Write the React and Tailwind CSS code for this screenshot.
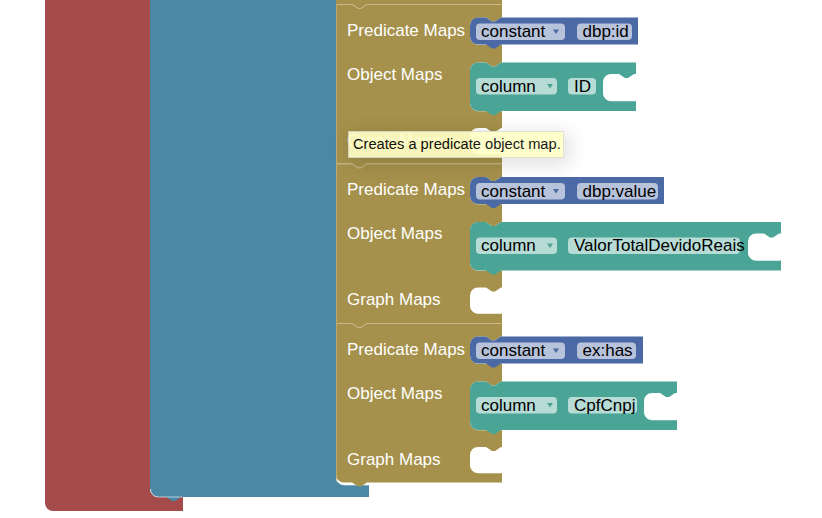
import React from 'react';

const FONT = '"Liberation Sans", Arial, sans-serif';

const RED = '#a54b4b';
const BLUE = '#4b88a5';
const OLIVE = '#a5914b';
const OLIVE_LIGHT = '#c6b886';
const CONST_BLUE = '#4b69a5';
const TEAL = '#4ba596';

// stacked "predicate object map" blocks inside the blue statement input
const stacks = [
    {
        T: 4,
        pred: { value: 'dbp:id', fieldEnd: 632, right: 638 },
        obj: { value: 'ID', fieldEnd: 596, mouth: 603 },
    },
    {
        T: 163.5,
        pred: { value: 'dbp:value', fieldEnd: 658, right: 664 },
        obj: { value: 'ValorTotalDevidoReais', fieldEnd: 740, mouth: 748 },
    },
    {
        T: 323,
        pred: { value: 'ex:has', fieldEnd: 636, right: 643 },
        obj: { value: 'CpfCnpj', fieldEnd: 637, mouth: 644 },
        last: true,
    },
];

// statement mouth on the olive block (opens to the right)
const oliveMouth = (top, bottom) =>
    `V ${top} H 501 l -6,4 -3,0 -6,-4 H 478 a 8,8 0 0,0 -8,8 V ${bottom - 8} a 8,8 0 0,0 8,8 H 502`;

function olivePath(T, last) {
    const bottom = T + 159.5;
    const foot = last
        ? `H 367 l -6,4 -3,0 -6,-4 H 344 a 8,8 0 0,1 -8,-8 Z`
        : `H 367 l -6,4 -3,0 -6,-4 H 336 Z`;
    return [
        `M 336,${T} H 352 l 6,4 3,0 6,-4 H 502`,
        oliveMouth(T + 13.5, T + 40.5),
        oliveMouth(T + 58.5, T + 107),
        oliveMouth(T + 124, T + 150),
        `V ${bottom}`,
        foot,
    ].join(' ');
}

function Label({ x, y, children }) {
    return (
        <text x={x} y={y} fill="#fff" fontSize="17" fontFamily={FONT}>
            {children}
        </text>
    );
}

function Field({ x, y, w, h = 16.5, textX, textY, children }) {
    return (
        <g>
            <rect x={x} y={y} width={w} height={h} rx="4" ry="4" fill="#fff" fillOpacity="0.6" />
            <text x={textX} y={textY} fill="#000" fontSize="17" fontFamily={FONT}>
                {children}
            </text>
        </g>
    );
}

function Arrow({ x, y, color }) {
    return <polygon points={`${x},${y} ${x + 6},${y} ${x + 3},${y + 4.5}`} fill={color} />;
}

function ConstantBlock({ t, value, fieldEnd, right }) {
    const d = `M 470,${t + 8} a 8,8 0 0,1 8,-8 H 486 l 6,4 3,0 6,-4 H ${right} V ${t + 27} H 501 l -6,4 -3,0 -6,-4 H 478 a 8,8 0 0,1 -8,-8 Z`;
    return (
        <g>
            <path d={d} fill={CONST_BLUE} />
            <Field x={476} y={t + 6} w={89} textX={481} textY={t + 19.5}>
                constant
            </Field>
            <Arrow x={553} y={t + 12} color={CONST_BLUE} />
            <Field x={577} y={t + 6} w={fieldEnd - 577} textX={582.5} textY={t + 19.5}>
                {value}
            </Field>
        </g>
    );
}

function ColumnBlock({ t, value, fieldEnd, mouth }) {
    const right = mouth + 33;
    const d = [
        `M 470,${t + 8} a 8,8 0 0,1 8,-8 H 486 l 6,4 3,0 6,-4 H ${right}`,
        `V ${t + 11.5} H ${mouth + 31} l -6,4 -3,0 -6,-4 H ${mouth + 8} a 8,8 0 0,0 -8,8`,
        `V ${t + 30.5} a 8,8 0 0,0 8,8 H ${right}`,
        `V ${t + 48.5} H 501 l -6,4 -3,0 -6,-4 H 478 a 8,8 0 0,1 -8,-8 Z`,
    ].join(' ');
    return (
        <g>
            <path d={d} fill={TEAL} />
            <path
                d={`M ${mouth + 0.5},${t + 30.5} a 8,8 0 0,0 8,8 H ${right - 0.5}`}
                fill="none"
                stroke="#ffffff"
                strokeOpacity="0.45"
            />
            <Field x={476} y={t + 15.5} w={81} textX={481} textY={t + 29}>
                column
            </Field>
            <Arrow x={547} y={t + 21.5} color={TEAL} />
            <Field x={568} y={t + 15.5} w={fieldEnd - 568} textX={574} textY={t + 29}>
                {value}
            </Field>
        </g>
    );
}

function PredicateObjectMap({ T, pred, obj, last }) {
    const mouthBottoms = [T + 40.5, T + 107, T + 150];
    return (
        <g>
            <path d={olivePath(T, last)} fill={OLIVE} />
            {/* top highlight with notch */}
            <path
                d={`M 336.5,${T + 0.5} H 352 l 6,4 3,0 6,-4 H 501.5`}
                fill="none"
                stroke={OLIVE_LIGHT}
            />
            <path d={`M 336.5,${T + 1} V ${T + 159}`} fill="none" stroke={OLIVE_LIGHT} strokeOpacity="0.7" />
            {mouthBottoms.map((b) => (
                <path
                    key={b}
                    d={`M 470.5,${b - 8} a 8,8 0 0,0 8,8 H 501.5`}
                    fill="none"
                    stroke="#ffffff"
                    strokeOpacity="0.55"
                />
            ))}
            <Label x={347} y={T + 31.5}>Predicate Maps</Label>
            <Label x={347} y={T + 75.5}>Object Maps</Label>
            <Label x={347} y={T + 141.5}>Graph Maps</Label>
            <ConstantBlock t={T + 13.5} {...pred} />
            <ColumnBlock t={T + 58.5} {...obj} />
        </g>
    );
}

export default function App() {
    return (
        <div className="relative h-[518px] w-[822px] overflow-hidden bg-white">
            {/* block canvas */}
            <svg className="absolute inset-0" width="822" height="518" viewBox="0 0 822 518">
                <path
                    d="M 45,-20 H 150 V 489 a 8,8 0 0,0 8,8 H 183 V 511 H 53 a 8,8 0 0,1 -8,-8 Z"
                    fill={RED}
                />
                <path
                    d="M 150,-20 H 336 V 477 a 8,8 0 0,0 8,8 H 369 V 497 H 181 l -6,4 -3,0 -6,-4 H 158 a 8,8 0 0,1 -8,-8 Z"
                    fill={BLUE}
                />
                <path d="M 150.5,489 a 8,8 0 0,0 8,8 H 182.5" fill="none" stroke="#ffffff" strokeOpacity="0.6" />
                <path d="M 336.5,477 a 8,8 0 0,0 8,8 H 368.5" fill="none" stroke="#ffffff" strokeOpacity="0.6" />
                {/* tail of the block above the first visible one */}
                <path d="M 336,-20 H 502 V 4 H 367 l -6,4 -3,0 -6,-4 H 336 Z" fill={OLIVE} />
                {stacks.map((s) => (
                    <PredicateObjectMap key={s.T} {...s} />
                ))}
            </svg>

            {/* tooltip */}
            <div
                className="absolute left-[348px] top-[131px] box-border h-[27px] w-[216px] whitespace-nowrap border border-[#ddddcc] bg-[#ffffc7] px-[4px] pt-[1px] text-[14.67px] leading-[23px] text-black opacity-90 shadow-[4px_4px_20px_1px_rgba(0,0,0,0.15)]"
                style={{ fontFamily: FONT }}
            >
                Creates a predicate object map.
            </div>
        </div>
    );
}
